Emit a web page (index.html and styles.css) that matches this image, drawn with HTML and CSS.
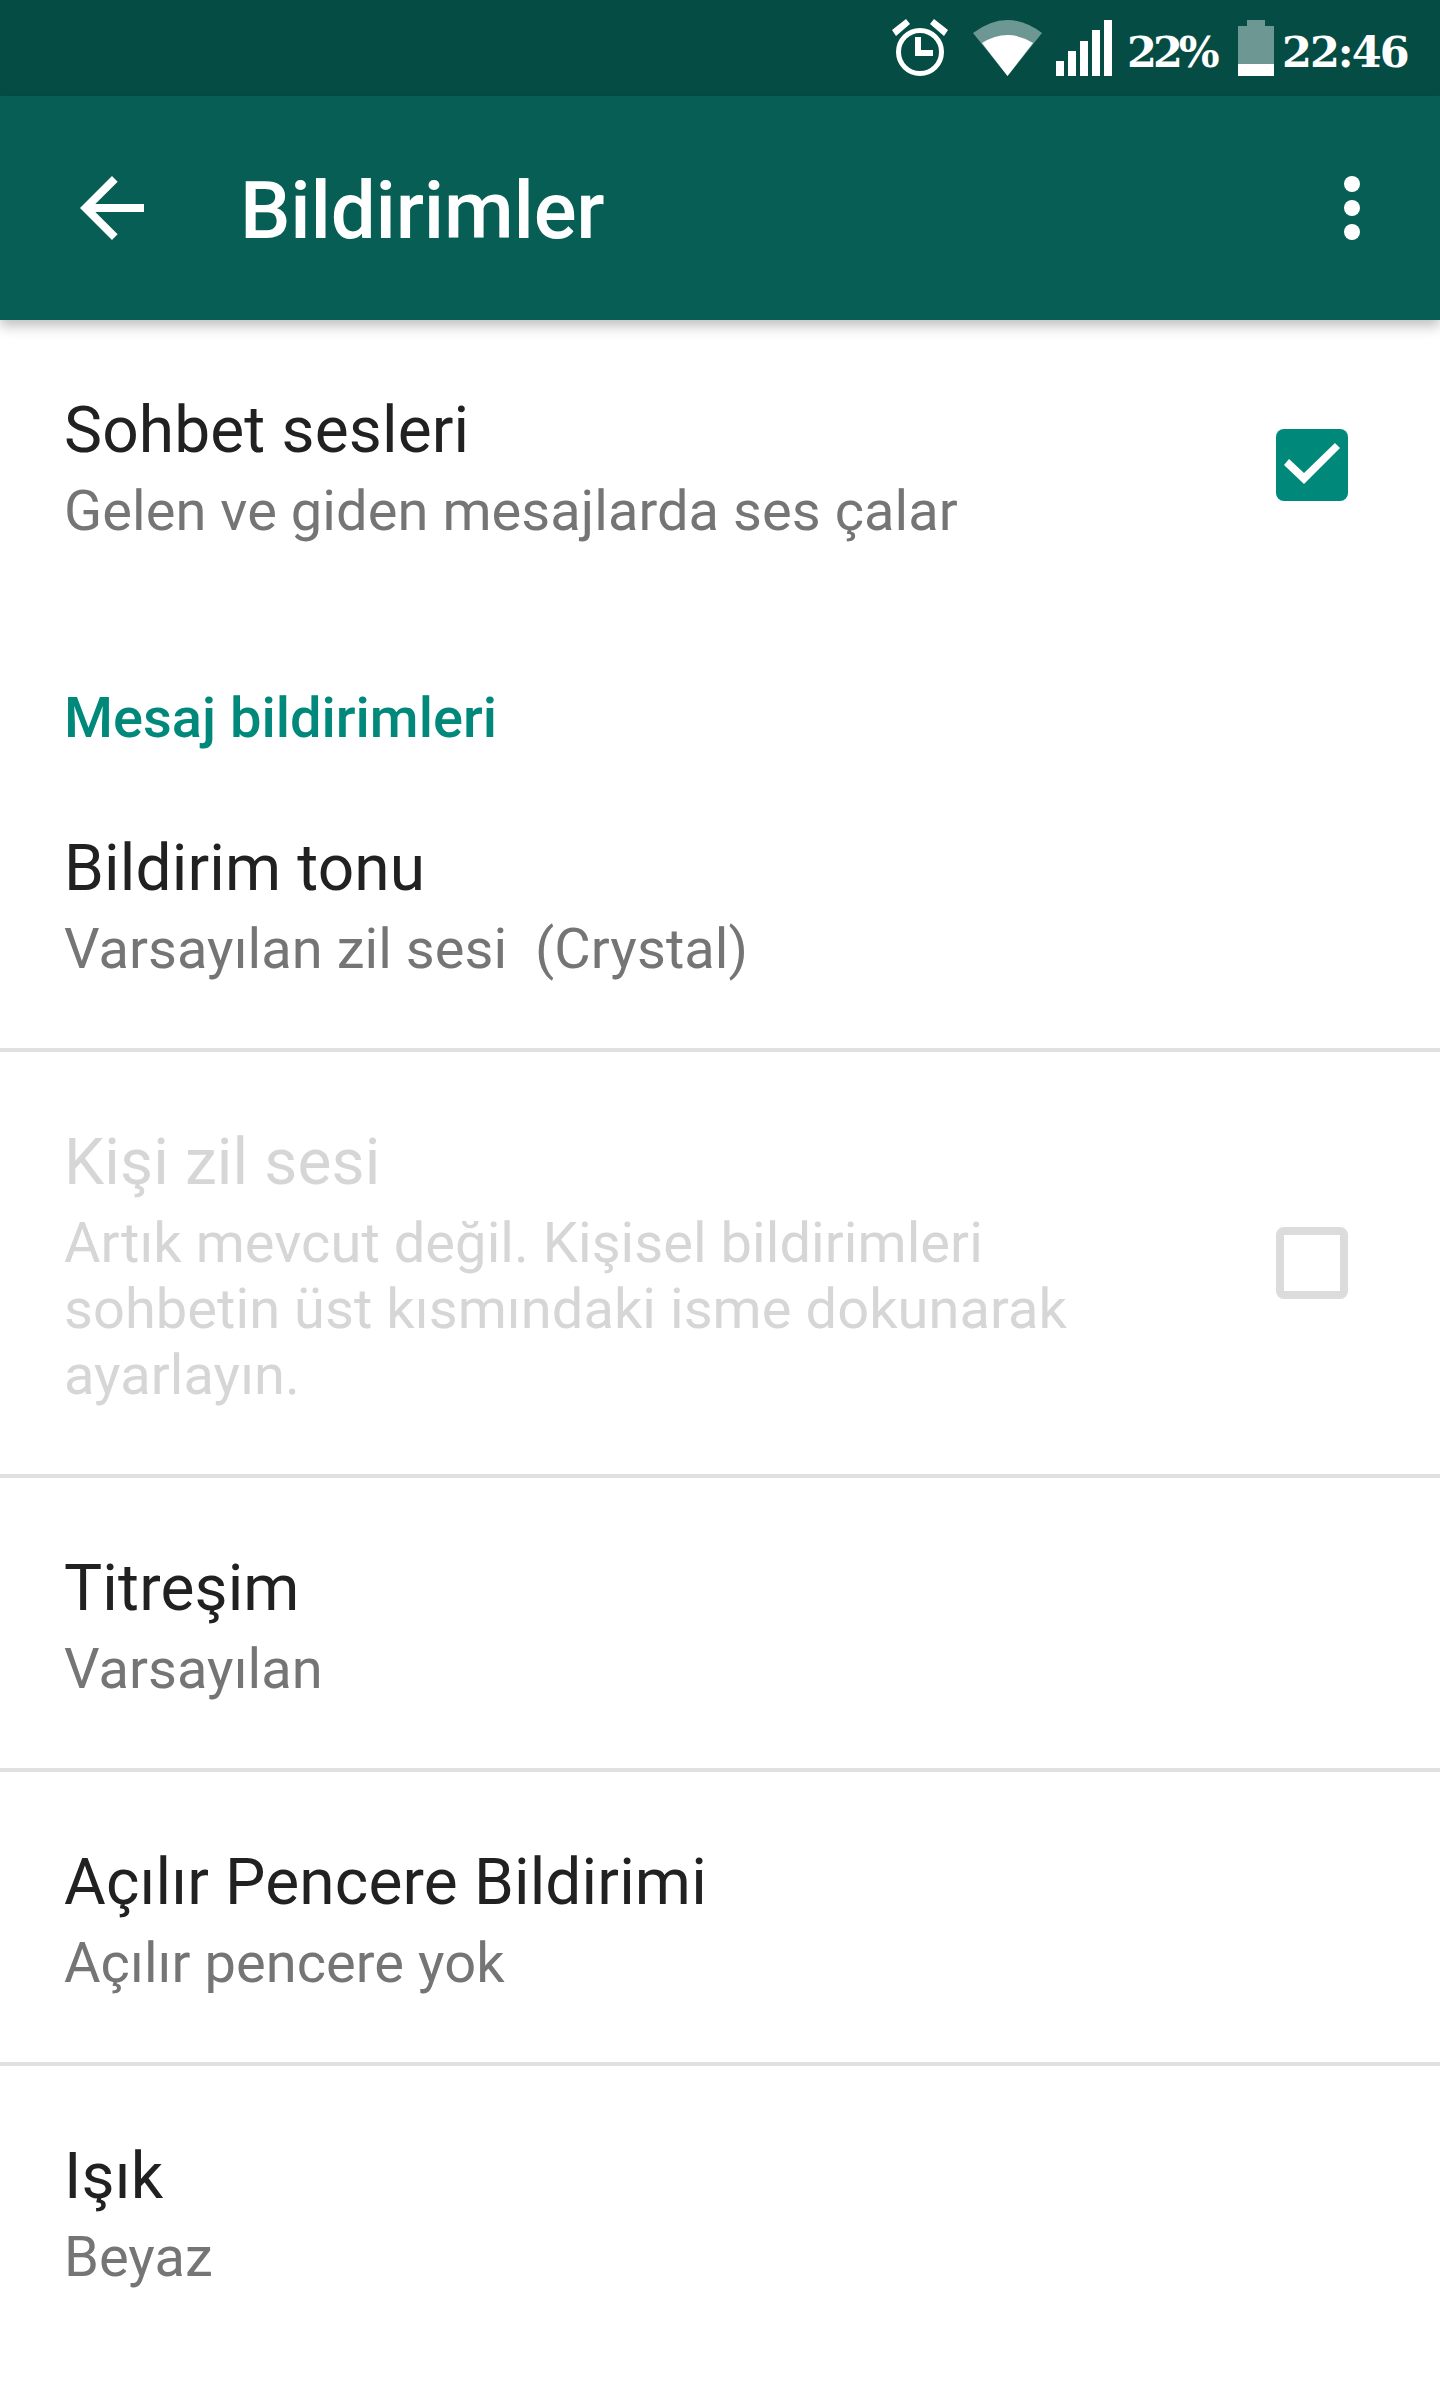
FILE: index.html
```html
<!DOCTYPE html>
<html lang="tr">
<head>
    <meta charset="UTF-8">
    <meta name="viewport" content="width=device-width, initial-scale=1.0">
    <title>Bildirimler</title>
    <link rel="stylesheet" href="styles.css">
</head>
<body>

<div class="status-bar">
    <!-- alarm -->
    <svg class="icon-alarm" width="56" height="57" viewBox="0 0 56 57">
        <path d="M0 11 L14 0 L18 5 L4 17Z M56 11 L42 0 L38 5 L52 17Z" fill="#fff"/>
        <circle cx="28" cy="33" r="21.5" fill="none" stroke="#fff" stroke-width="5"/>
        <path d="M23 18 H29 V31 H41 V37 H23Z" fill="#fff"/>
    </svg>
    <!-- wifi -->
    <svg class="icon-wifi" width="69" height="56" viewBox="0 0 69 56">
        <path d="M0 13 Q34.5 -13 69 13 L34.5 56Z" fill="#fff" opacity=".42"/>
        <path d="M9 23 Q34.5 7 60 23 L34.5 56Z" fill="#fff"/>
    </svg>
    <!-- signal -->
    <div class="signal">
        <span class="bar-1"></span>
        <span class="bar-2"></span>
        <span class="bar-3"></span>
        <span class="bar-4"></span>
        <span class="bar-5"></span>
    </div>
    <span class="status-text pct">22%</span>
    <!-- battery -->
    <svg class="icon-battery" width="36" height="56" viewBox="0 0 36 56">
        <path d="M9 0 H27 V6 H36 V44 H0 V6 H9Z" fill="#fff" opacity=".42"/>
        <rect y="44" width="36" height="12" fill="#fff"/>
    </svg>
    <span class="status-text clock">22:46</span>
</div>

<div class="app-bar">
    <svg class="icon-back" width="96" height="96" viewBox="0 0 24 24">
        <path d="M20 11H7.83l5.59-5.59L12 4l-8 8 8 8 1.41-1.41L7.83 13H20v-2z" fill="#fff"/>
    </svg>
    <h1>Bildirimler</h1>
    <div class="more">
        <span></span>
        <span></span>
        <span></span>
    </div>
</div>

<div class="content">
    <div class="pref pref-first">
        <div class="pref-text">
            <div class="pref-title">Sohbet sesleri</div>
            <div class="pref-sub">Gelen ve giden mesajlarda ses çalar</div>
        </div>
        <div class="checkbox checked">
            <svg width="72" height="72" viewBox="0 0 72 72">
                <path d="M8 36 L13 30 L28 44 L59 14 L64 19 L28 55Z" fill="#fff"/>
            </svg>
        </div>
    </div>

    <h2 class="group-title">Mesaj bildirimleri</h2>

    <div class="pref pref-tone">
        <div class="pref-text">
            <div class="pref-title">Bildirim tonu</div>
            <div class="pref-sub">Varsayılan zil sesi&nbsp; (Crystal)</div>
        </div>
    </div>

    <div class="pref pref-disabled">
        <div class="pref-text">
            <div class="pref-title">Kişi zil sesi</div>
            <div class="pref-sub">Artık mevcut değil. Kişisel bildirimleri sohbetin üst kısmındaki isme dokunarak ayarlayın.</div>
        </div>
        <div class="checkbox"></div>
    </div>

    <div class="pref">
        <div class="pref-text">
            <div class="pref-title">Titreşim</div>
            <div class="pref-sub">Varsayılan</div>
        </div>
    </div>

    <div class="pref">
        <div class="pref-text">
            <div class="pref-title">Açılır Pencere Bildirimi</div>
            <div class="pref-sub">Açılır pencere yok</div>
        </div>
    </div>

    <div class="pref pref-last">
        <div class="pref-text">
            <div class="pref-title">Işık</div>
            <div class="pref-sub">Beyaz</div>
        </div>
    </div>
</div>

</body>
</html>
```

FILE: styles.css
```css
* {
    box-sizing: border-box;
}
html, body {
    margin: 0;
    background-color: #fff;
}
body {
    font-family: Roboto, "Noto Sans", sans-serif;
    width: 1440px;
    height: 2392px;
    overflow: hidden;
}
.status-bar {
    height: 96px;
    background-color: #054d44;
    display: flex;
    align-items: flex-end;
    padding-bottom: 20px;
    padding-left: 892px;
    color: #fff;
}
.icon-alarm {
    margin-right: 25px;
}
.icon-wifi {
    margin-right: 14px;
}
.signal {
    display: flex;
    align-items: flex-end;
    gap: 4px;
    height: 56px;
    margin-right: 15px;
}
.signal span {
    width: 8px;
    background-color: #fff;
}
.bar-1 { height: 15px; }
.bar-2 { height: 25px; }
.bar-3 { height: 35px; }
.bar-4 { height: 46px; }
.bar-5 { height: 56px; }
.status-text {
    font-family: "DejaVu Serif", serif;
    font-weight: 700;
    font-size: 43px;
    line-height: 48px;
    letter-spacing: -2px;
}
.pct {
    width: 111px;
    letter-spacing: -4px;
}
.icon-battery {
    margin-right: 8px;
}
.app-bar {
    height: 224px;
    background-color: #075e54;
    display: flex;
    align-items: center;
    padding-left: 64px;
    box-shadow: 0 6px 12px rgba(0, 0, 0, 0.25);
    position: relative;
    color: #fff;
}
.icon-back {
    margin-right: 80px;
}
.app-bar h1 {
    margin: 5px 0 0;
    font-size: 80px;
    font-weight: 500;
    letter-spacing: -0.2px;
    flex: 1;
}
.more {
    display: flex;
    flex-direction: column;
    gap: 8px;
    margin-right: 80px;
}
.more span {
    width: 16px;
    height: 16px;
    border-radius: 50%;
    background-color: #fff;
}
.pref {
    display: flex;
    align-items: center;
    justify-content: space-between;
    padding: 73px 92px 66px 64px;
    border-bottom: 4px solid #e0e0e0;
}
.pref-first {
    border-bottom: 0;
}
.pref-tone {
    padding-top: 0;
}
.pref-last {
    border-bottom: 0;
}
.pref-text {
    width: 1020px;
}
.pref-title {
    font-size: 64px;
    line-height: 75px;
    letter-spacing: 0.15px;
    color: #212121;
    margin-bottom: 10px;
}
.pref-sub {
    font-size: 56px;
    line-height: 66px;
    letter-spacing: 0.06px;
    color: #757575;
}
.pref-disabled .pref-title,
.pref-disabled .pref-sub {
    color: #d6d6d6;
}
.group-title {
    margin: 0;
    padding: 75px 64px 80px;
    font-size: 56px;
    line-height: 66px;
    font-weight: 500;
    color: #00897b;
}
.checkbox {
    width: 72px;
    height: 72px;
    margin-bottom: 7px;
    border: 8px solid #dcdcdc;
    border-radius: 8px;
}
.checkbox.checked {
    border: 0;
    background-color: #00897b;
}
.checkbox svg {
    display: block;
}
```
